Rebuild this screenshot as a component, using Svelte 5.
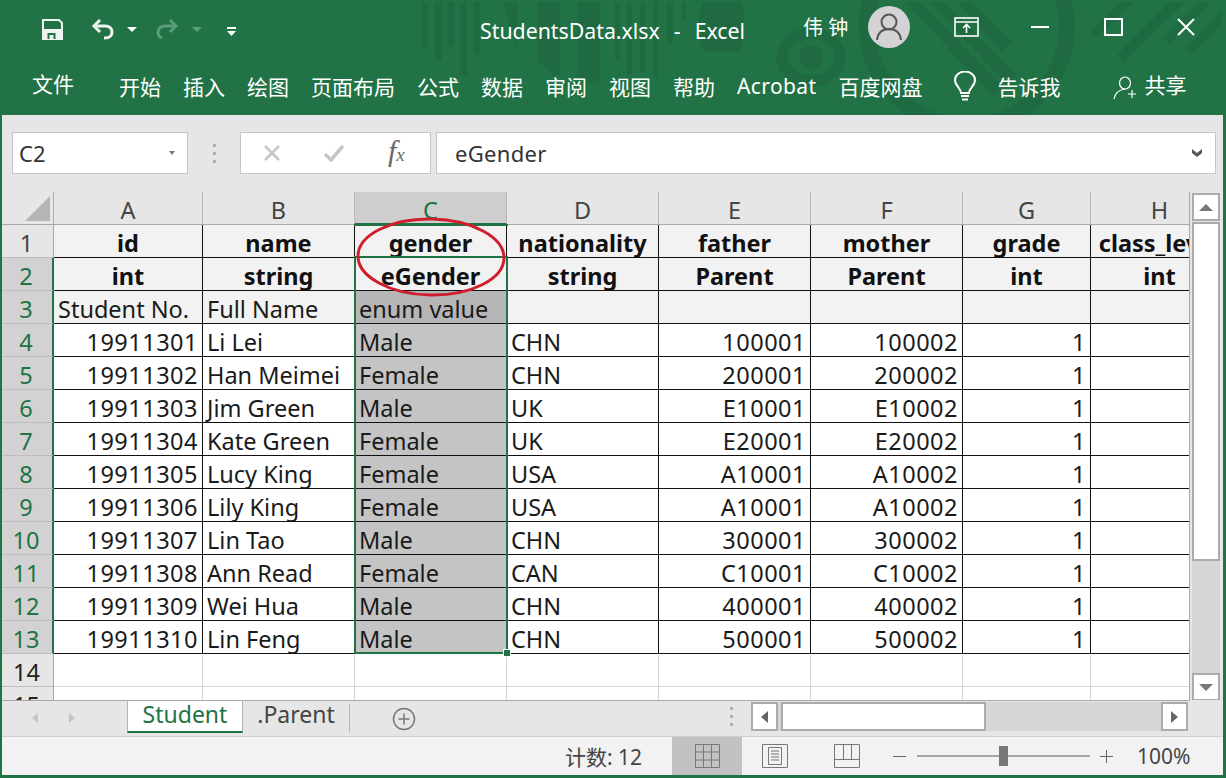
<script>
  const menu = ['开始', '插入', '绘图', '页面布局', '公式', '数据', '审阅', '视图', '帮助'];
  const cols = ['A', 'B', 'C', 'D', 'E', 'F', 'G', 'H'];

  const students = [
    ['19911301', 'Li Lei', 'Male', 'CHN', '100001', '100002', '1'],
    ['19911302', 'Han Meimei', 'Female', 'CHN', '200001', '200002', '1'],
    ['19911303', 'Jim Green', 'Male', 'UK', 'E10001', 'E10002', '1'],
    ['19911304', 'Kate Green', 'Female', 'UK', 'E20001', 'E20002', '1'],
    ['19911305', 'Lucy King', 'Female', 'USA', 'A10001', 'A10002', '1'],
    ['19911306', 'Lily King', 'Female', 'USA', 'A10001', 'A10002', '1'],
    ['19911307', 'Lin Tao', 'Male', 'CHN', '300001', '300002', '1'],
    ['19911308', 'Ann Read', 'Female', 'CAN', 'C10001', 'C10002', '1'],
    ['19911309', 'Wei Hua', 'Male', 'CHN', '400001', '400002', '1'],
    ['19911310', 'Lin Feng', 'Male', 'CHN', '500001', '500002', '1']
  ];

  const names = ['id', 'name', 'gender', 'nationality', 'father', 'mother', 'grade', 'class_level'];
  const types = ['int', 'string', 'eGender', 'string', 'Parent', 'Parent', 'int', 'int'];
  const notes = ['Student No.', 'Full Name', 'enum value', '', '', '', '', ''];
  const rightAligned = [0, 4, 5, 6];
</script>

<div class="window">
  <header class="ribbon">
    <svg class="watermark" width="1221" height="115" viewBox="2 0 1221 115" fill="#1f6a41">
      <rect x="422" y="2" width="6" height="45" />
      <rect x="435" y="2" width="7" height="58" />
      <rect x="448" y="2" width="7" height="45" />
      <rect x="460" y="2" width="7" height="73" />
      <rect x="473" y="2" width="7" height="53" />
      <path d="M503 2h14v45z" />
      <path d="M538 2h22v73h-8l-14-14z" />
      <path d="M577 2h23v81h-10l-13-8z" />
      <rect x="615" y="2" width="5" height="58" />
      <rect x="627" y="2" width="5" height="72" />
      <rect x="640" y="2" width="5" height="70" />
      <rect x="653" y="2" width="5" height="75" />
      <rect x="667" y="2" width="6" height="41" />
      <rect x="682" y="2" width="4" height="18" />
      <path d="M704 2h36c6 10 6 40 0 50h-36c-8-12-8-38 0-50z" />
      <ellipse cx="811" cy="57" rx="29" ry="24" fill="none" stroke="#1f6a41" stroke-width="11" />
      <circle cx="811" cy="57" r="12" />
      <circle cx="967" cy="26" r="100" fill="none" stroke="#1f6a41" stroke-width="16" />
      <path d="M905 2h14l84 84-10 10zM930 2h14l72 72-10 10zM958 2h14l40 40-10 10z" />
      <path d="M1090 32l30-30h14l-38 36zM1117 55l53-53h16l-61 60zM1163 38l36-36h12l-42 42zM1185 48l36-36v14l-30 28z" />
    </svg>

    <div class="title-row">
      <svg class="qat save" width="21" height="21" viewBox="0 0 21 21">
        <path d="M1 1h16l3 3v16H1z" fill="none" stroke="#eef4f0" stroke-width="2" />
        <path d="M1 10h19v10H1z" fill="#eef4f0" />
        <path d="M5.500 20v-6h8v6h-2v-4h-4v4z" fill="#217346" />
      </svg>
      <svg class="qat undo" width="24" height="22" viewBox="0 0 24 22" fill="none" stroke="#eef4f0" stroke-width="3">
        <path d="M9 2L3 8l6 6" />
        <path d="M3 8h11c5 0 7 3 7 6s-2 6-7 6h-1" />
      </svg>
      <span class="caret one"></span>
      <svg class="qat redo" width="22" height="22" viewBox="0 0 22 22" fill="none" stroke="#5c9c7b" stroke-width="3">
        <path d="M14 2l6 6-6 6" />
        <path d="M20 8H9c-4 0-7 3-7 6s1 5 4 6" />
      </svg>
      <span class="caret dim"></span>
      <svg class="customize" width="9" height="9" viewBox="0 0 9 9">
        <rect width="9" height="2" fill="#fff" />
        <path d="M0 4h9L4.500 9z" fill="#fff" />
      </svg>
      <span class="doc-title">StudentsData.xlsx<span class="dash">-</span>Excel</span>
      <span class="user">伟 钟</span>
      <svg class="avatar" width="42" height="42" viewBox="0 0 42 42">
        <circle cx="21" cy="21" r="21" fill="#d4d2d4" />
        <circle cx="21" cy="16" r="7.500" fill="none" stroke="#555" stroke-width="2" />
        <path d="M9 34c1-8 6-11 12-11s11 3 12 11" fill="none" stroke="#555" stroke-width="2" />
      </svg>
      <svg class="win-btn display" width="25" height="20" viewBox="0 0 25 20" fill="none" stroke="#fff" stroke-width="1.600">
        <rect x="1" y="1" width="23" height="18" />
        <path d="M1 5h23M12.500 16V8M9 11l3.500-3.500L16 11" />
      </svg>
      <svg class="win-btn min" width="18" height="2" viewBox="0 0 18 2"><rect width="18" height="2" fill="#fff" /></svg>
      <svg class="win-btn max" width="19" height="18" viewBox="0 0 19 18"><rect x="1" y="1" width="17" height="16" fill="none" stroke="#fff" stroke-width="2" /></svg>
      <svg class="win-btn close" width="18" height="18" viewBox="0 0 18 18"><path d="M1 1l16 16M17 1L1 17" stroke="#fff" stroke-width="2" /></svg>
    </div>

    <nav class="menu-row">
      <span class="file">文件</span>
      {#each menu as item}
        <span>{item}</span>
      {/each}
      <span class="acrobat">Acrobat</span>
      <span>百度网盘</span>
      <svg class="bulb" width="24" height="30" viewBox="0 0 24 30" fill="none" stroke="#fff" stroke-width="2">
        <path d="M8 22c0-5-6-7-6-13a10 8.500 0 0 1 20 0c0 6-6 8-6 13z" />
        <path d="M8 25h8M9 28.500h6" />
      </svg>
      <span class="tell">告诉我</span>
      <svg class="share-icon" width="24" height="24" viewBox="0 0 24 24" fill="none" stroke="#fff" stroke-width="1.200">
        <ellipse cx="12" cy="7" rx="5.500" ry="6" />
        <path d="M1 23c1-6 4-9 11-10M15 18h8M19 14v8" />
      </svg>
      <span class="share">共享</span>
    </nav>
  </header>

  <section class="formula-bar">
    <div class="name-box">C2<span class="name-caret"></span></div>
    <div class="grip"><i></i><i></i><i></i></div>
    <div class="fx-box">
      <svg width="18" height="18" viewBox="0 0 18 18"><path d="M2 2l14 14M16 2L2 16" stroke="#c6c6c6" stroke-width="2.500" /></svg>
      <svg width="22" height="18" viewBox="0 0 22 18"><path d="M2 10l6 6L20 2" fill="none" stroke="#c6c6c6" stroke-width="3.500" /></svg>
      <span class="fx">f<small>x</small></span>
    </div>
    <div class="formula-input">
      <span>eGender</span>
      <svg width="12" height="10" viewBox="0 0 12 10"><path d="M1 1l5 4 5-4v4l-5 4-5-4z" fill="#595959" /></svg>
    </div>
  </section>

  <section class="sheet-row">
    <div class="sheet">
      <div class="grid">
        <div class="corner"><span></span></div>
        {#each cols as c}
          <div class="col-head" class:active={c === 'C'}>{c}</div>
        {/each}

        <div class="row-head first">1</div>
        {#each names as n}
          <div class="cell head">{n}</div>
        {/each}

        <div class="row-head active">2</div>
        {#each types as t}
          <div class="cell head">{t}</div>
        {/each}

        <div class="row-head active">3</div>
        {#each notes as n, i}
          <div class="cell note" class:picked-dark={i === 2}>{n}</div>
        {/each}

        {#each students as row, r}
          <div class="row-head active">{r + 4}</div>
          {#each row as v, i}
            <div class="cell" class:num={rightAligned.includes(i)} class:picked={i === 2}>{v}</div>
          {/each}
          <div class="cell"></div>
        {/each}

        <div class="row-head plain">14</div>
        {#each cols as c}
          <div class="cell empty"></div>
        {/each}
        <div class="row-head plain">15</div>
        {#each cols as c}
          <div class="cell empty"></div>
        {/each}
      </div>

      <div class="gutter-line"></div>
      <div class="selection"><span class="handle"></span></div>
      <svg class="ring" width="154" height="82" viewBox="0 0 154 82">
        <ellipse cx="76" cy="41" rx="73" ry="38" fill="none" stroke="#cf1f2e" stroke-width="3" transform="rotate(1 76 41)" />
      </svg>
    </div>

    <aside class="v-scroll">
      <div class="sb-btn"><span class="tri up"></span></div>
      <div class="v-thumb"></div>
      <div class="v-track"></div>
      <div class="sb-btn"><span class="tri down"></span></div>
    </aside>
  </section>

  <section class="tab-bar">
    <div class="tab-nav"><span class="nav-tri left"></span><span class="nav-tri right"></span></div>
    <div class="tab on">Student</div>
    <div class="tab other">.Parent</div>
    <span class="tab-sep"></span>
    <svg class="add" width="24" height="24" viewBox="0 0 24 24" fill="none" stroke="#777" stroke-width="1.500">
      <circle cx="12" cy="12" r="10.500" />
      <path d="M12 6.500v11M6.500 12h11" />
    </svg>
    <div class="grip tab-grip"><i></i><i></i><i></i></div>
    <div class="h-scroll">
      <div class="sb-btn h"><span class="tri left"></span></div>
      <div class="h-thumb"></div>
      <div class="h-track"></div>
      <div class="sb-btn h"><span class="tri right"></span></div>
    </div>
  </section>

  <footer class="status">
    <span class="count">计数: 12</span>
    <div class="view on">
      <svg width="25" height="24" viewBox="0 0 25 24" fill="none" stroke="#777" stroke-width="1">
        <path d="M.5.500h24v23H.5zM8.500.500v23M16.500.500v23M.5 8h24M.5 16h24" />
      </svg>
    </div>
    <div class="view page">
      <svg width="26" height="24" viewBox="0 0 26 24" fill="none" stroke="#777" stroke-width="1">
        <path d="M.5.500h25v23H.5zM6.500 3.500h13v17h-13zM9 7h8M9 10h8M9 13h8M9 16h8" />
      </svg>
    </div>
    <div class="view brk">
      <svg width="26" height="24" viewBox="0 0 26 24" fill="none" stroke="#777" stroke-width="1">
        <path d="M.5.500h25v23H.5zM.5 15.500h25M9.500.500v15M17.500.500v15" />
      </svg>
    </div>
    <span class="zoom-minus"></span>
    <div class="slider"><span></span></div>
    <svg class="zoom-plus" width="13" height="13" viewBox="0 0 13 13"><path d="M0 6.500h13M6.500 0v13" stroke="#666" /></svg>
    <span class="pct">100%</span>
  </footer>
</div>

<style>
  :global(body) {
    margin: 0;
    background: #217346;
  }

  .window {
    width: 1226px;
    height: 778px;
    box-sizing: border-box;
    border-left: 2px solid #217346;
    border-right: 3px solid #217346;
    border-bottom: 3px solid #217346;
    background: #e6e6e6;
    font-family: "Noto Sans", "Noto Sans CJK SC", sans-serif;
    color: #222;
    overflow: hidden;
    display: flex;
    flex-direction: column;
  }

  /* title bar and tabs */
  .ribbon {
    position: relative;
    height: 115px;
    background: #217346;
    color: #fff;
    flex: none;
    overflow: hidden;
  }

  .watermark {
    position: absolute;
    left: 0;
    top: 0;
  }

  .title-row,
  .menu-row {
    position: relative;
    display: flex;
    align-items: center;
  }

  .title-row {
    height: 58px;
  }

  .save { margin-left: 40px; }
  .undo { margin-left: 28px; }
  .redo { margin-left: 19px; }

  .caret {
    width: 0;
    height: 0;
    border: 5px solid transparent;
    border-top: 5px solid #fff;
    border-bottom: 0;
  }
  .caret.one { margin-left: 12px; }
  .caret.dim { margin-left: 14px; border-top-color: #5c9c7b; }

  .customize {
    margin-left: 25px;
    margin-top: 4px;
  }

  .doc-title {
    margin-left: 244px;
    font-size: 21.300px;
    white-space: nowrap;
    width: 323px;
    padding-top: 2px;
  }

  .dash {
    margin: 0 14px;
  }

  .user {
    font-size: 20px;
    width: 65px;
    margin-top: -5px;
    white-space: nowrap;
  }

  .avatar { margin-top: -4px; }
  .win-btn { margin-top: -4px; flex: none; }
  .display { margin-left: 44px; }
  .min { margin-left: 52px; }
  .max { margin-left: 55px; }
  .close { margin-left: 54px; }

  .menu-row {
    height: 57px;
    gap: 22px;
    font-size: 21px;
    white-space: nowrap;
    padding-bottom: 2px;
    box-sizing: border-box;
  }

  .file {
    margin-left: 30px;
    margin-right: 23px;
    margin-top: -5px;
  }

  .acrobat { letter-spacing: 0.4px; }
  .bulb { margin-left: 8px; }
  .tell { margin-left: -1px; }
  .share-icon { margin-left: 30px; margin-top: 4px; }
  .share { margin-left: -14px; margin-top: -4px; }

  /* formula bar */
  .formula-bar {
    height: 77px;
    flex: none;
    box-sizing: border-box;
    padding: 17px 7px 18px 10px;
    display: flex;
    background: #e6e6e6;
  }

  .name-box,
  .fx-box,
  .formula-input {
    background: #fff;
    border: 1px solid #c6c6c6;
    box-sizing: border-box;
    display: flex;
    align-items: center;
    font-size: 22px;
    color: #333;
  }

  .name-box {
    width: 176px;
    padding-left: 6px;
    justify-content: space-between;
  }

  .name-caret {
    width: 0;
    height: 0;
    margin-right: 12px;
    border: 3.500px solid transparent;
    border-top: 4px solid #777;
    border-bottom: 0;
  }

  .grip {
    width: 52px;
    display: flex;
    flex-direction: column;
    align-items: center;
    justify-content: center;
    gap: 5px;
  }

  .grip i {
    width: 3px;
    height: 3px;
    background: #b0b0b0;
  }

  .fx-box {
    width: 191px;
    padding-left: 22px;
    gap: 42px;
  }

  .fx {
    font-family: "Liberation Serif", serif;
    font-style: italic;
    font-size: 30px;
    line-height: 30px;
    color: #666;
    margin-left: 1px;
  }

  .fx small {
    font-size: 19px;
  }

  .formula-input {
    flex: 1;
    margin-left: 5px;
    padding: 0 12px 0 18px;
    justify-content: space-between;
    letter-spacing: 0.3px;
  }

  /* sheet */
  .sheet-row {
    display: flex;
    height: 509px;
    flex: none;
  }

  .sheet {
    position: relative;
    width: 1188px;
    height: 509px;
    overflow: hidden;
    border-right: 1px solid #a8a8a8;
    border-bottom: 1px solid #a8a8a8;
    box-sizing: border-box;
    background: #fff;
  }

  .grid {
    display: grid;
    grid-template-columns: 52px 149px 152px 152px 152px 152px 152px 128px 138px;
    grid-auto-rows: 33px;
    font-size: 23.500px;
    line-height: 36px;
    width: 1227px;
  }

  .grid > div {
    box-sizing: border-box;
    white-space: nowrap;
    overflow: hidden;
  }

  .corner {
    background: #e6e6e6;
    border-right: 1px solid #b0b0b0;
    border-bottom: 1px solid #a8a8a8;
    padding: 4px 0 0 23px;
  }

  .corner span {
    display: block;
    width: 0;
    height: 0;
    border-left: 25px solid transparent;
    border-bottom: 25px solid #b5b5b5;
  }

  .col-head {
    background: #e6e6e6;
    color: #444;
    text-align: center;
    border-right: 1px solid #b8b8b8;
    border-bottom: 1px solid #a8a8a8;
  }

  .col-head.active {
    background: #cecece;
    color: #217346;
    border-bottom: 2px solid #217346;
  }

  .row-head {
    background: #e6e6e6;
    color: #444;
    text-align: center;
    padding-right: 2px;
    border-right: 1px solid #a8a8a8;
    border-bottom: 1px solid #bdbdbd;
  }

  .row-head.active {
    background: #d2d2d2;
    color: #217346;
    border-right: 2px solid #217346;
  }

  .row-head.plain {
    color: #222;
  }

  .cell {
    background: #fff;
    color: #1a1a1a;
    padding: 0 4px;
    border-right: 1px solid #111;
    border-bottom: 1px solid #111;
  }

  .cell.head {
    background: #f2f2f2;
    font-weight: 700;
    text-align: center;
    color: #111;
  }

  .cell.note {
    background: #f2f2f2;
  }

  .cell.num {
    text-align: right;
    letter-spacing: 0.5px;
  }

  .cell.picked {
    background: #c4c4c4;
  }

  .cell.picked-dark {
    background: #b6b6b6;
  }

  .cell.empty {
    border-right-color: #d6d6d6;
    border-bottom-color: #d6d6d6;
  }

  .gutter-line {
    position: absolute;
    left: 352px;
    top: 32px;
    width: 154px;
    height: 2px;
    background: #217346;
  }

  .selection {
    position: absolute;
    left: 352px;
    top: 64px;
    width: 154px;
    height: 398px;
    box-sizing: border-box;
    border: 2px solid #217346;
  }

  .handle {
    position: absolute;
    right: -5px;
    bottom: -5px;
    width: 6px;
    height: 6px;
    background: #217346;
    border: 1px solid #fff;
  }

  .ring {
    position: absolute;
    left: 353px;
    top: 24px;
  }

  /* scrollbars */
  .v-scroll {
    width: 33px;
    box-sizing: border-box;
    padding: 1px 3px 0 2px;
    display: flex;
    flex-direction: column;
    background: #e6e6e6;
  }

  .sb-btn {
    flex: none;
    width: 28px;
    height: 28px;
    box-sizing: border-box;
    background: #fff;
    border: 2px solid #ababab;
    display: flex;
    align-items: center;
    justify-content: center;
  }

  .sb-btn.h {
    width: 27px;
    height: 29px;
  }

  .tri {
    width: 0;
    height: 0;
    border: 6px solid transparent;
  }

  .tri.up { border-top: 0; border-bottom: 7px solid #777; border-width: 0 7px 7px; }
  .tri.down { border-bottom: 0; border-top: 7px solid #777; border-width: 7px 7px 0; }
  .tri.left { border-left: 0; border-right: 7px solid #666; }
  .tri.right { border-right: 0; border-left: 7px solid #666; }

  .v-thumb {
    width: 28px;
    height: 339px;
    margin-top: 1px;
    box-sizing: border-box;
    background: #fff;
    border: 2px solid #ababab;
    flex: none;
  }

  .v-track {
    flex: 1;
    width: 28px;
    background: #d6d6d6;
    margin-bottom: 0;
  }

  /* sheet tabs */
  .tab-bar {
    height: 37px;
    flex: none;
    display: flex;
    background: #e6e6e6;
    box-sizing: border-box;
    border-bottom: 1px solid #d0d0d0;
    margin-top: -1px;
  }

  .tab-nav {
    width: 125px;
    display: flex;
    align-items: center;
    padding-left: 30px;
    gap: 31px;
    box-sizing: border-box;
  }

  .nav-tri {
    width: 0;
    height: 0;
    border: 5px solid transparent;
  }

  .nav-tri.left { border-left: 0; border-right: 6px solid #c4c4c4; }
  .nav-tri.right { border-right: 0; border-left: 6px solid #c4c4c4; }

  .tab {
    height: 33px;
    box-sizing: border-box;
    width: 116px;
    text-align: center;
    font-size: 23px;
    line-height: 28px;
    color: #444;
  }

  .tab.other {
    padding-right: 10px;
  }

  .tab.on {
    background: #fff;
    color: #217346;
    border-left: 1px solid #b5b5b5;
    border-right: 1px solid #b5b5b5;
    border-bottom: 2px solid #217346;
  }

  .tab-sep {
    width: 1px;
    height: 28px;
    margin: 4px 0 0 -10px;
    background: #b5b5b5;
  }

  .add {
    margin: 7px 0 0 42px;
  }

  .tab-grip {
    width: 8px;
    margin: 0 0 0 311px;
    padding-bottom: 4px;
  }

  .h-scroll {
    display: flex;
    margin: 2px 0 0 16px;
    width: 437px;
    height: 29px;
    background: #d6d6d6;
  }

  .h-thumb {
    width: 205px;
    margin-left: 3px;
    background: #fff;
    box-sizing: border-box;
    border: 2px solid #ababab;
  }

  .h-track {
    flex: 1;
  }

  /* status bar */
  .status {
    flex: 1;
    display: flex;
    align-items: center;
    background: #f2f2f2;
    font-size: 21px;
    color: #444;
  }

  .count {
    margin-left: 563px;
    width: 107px;
    white-space: nowrap;
  }

  .view {
    width: 70px;
    align-self: stretch;
    display: flex;
    align-items: center;
    justify-content: center;
  }

  .view.on { background: #c2c2c2; }
  .view.page { margin-left: -2px; }
  .view.brk { margin-left: 2px; }

  .zoom-minus {
    width: 13px;
    height: 1px;
    background: #666;
    margin-left: 11px;
  }

  .slider {
    position: relative;
    width: 173px;
    height: 2px;
    background: #a6a6a6;
    margin-left: 11px;
  }

  .slider span {
    position: absolute;
    left: 82px;
    top: -9px;
    width: 9px;
    height: 20px;
    background: #777;
  }

  .zoom-plus { margin-left: 10px; }

  .pct {
    margin-left: 24px;
    font-size: 21px;
    white-space: nowrap;
  }
</style>
